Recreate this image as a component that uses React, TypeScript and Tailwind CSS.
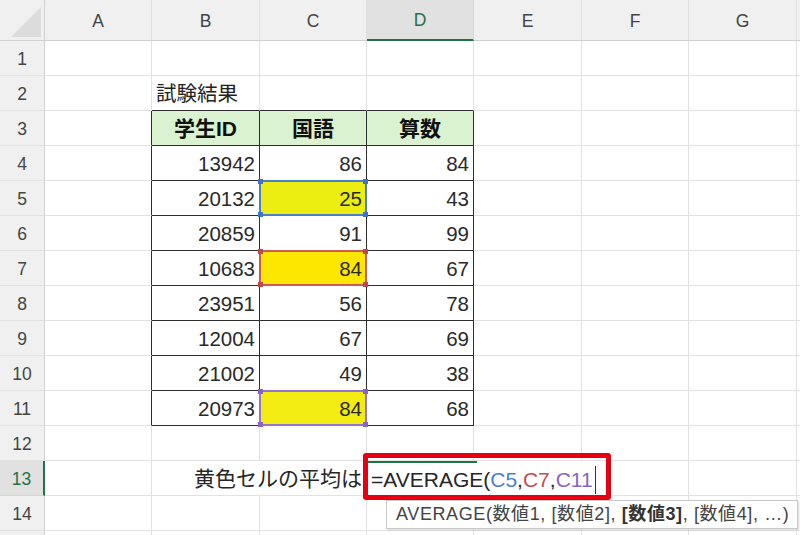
import React from "react";

const COLS = ["A", "B", "C", "D", "E", "F", "G", "H"];
const ROWS = Array.from({ length: 15 }, (_, i) => i + 1);

const scores = [
  [13942, 86, 84],
  [20132, 25, 43],
  [20859, 91, 99],
  [10683, 84, 67],
  [23951, 56, 78],
  [12004, 67, 69],
  [21002, 49, 38],
  [20973, 84, 68],
];

const yellow: Record<string, string> = {
  "C5": "bg-[#ecee12]",
  "C7": "bg-[#fde600]",
  "C11": "bg-[#f2ec12]",
};

// colored frames Excel draws round the ranges a formula refers to
const refs: Record<string, { line: string; dot: string }> = {
  "C5": { line: "border-[#4a7fd0]", dot: "bg-[#3f73c8]" },
  "C7": { line: "border-[#cc5a5a]", dot: "bg-[#c04848]" },
  "C11": { line: "border-[#9a72d4]", dot: "bg-[#8a62c8]" },
};

const font = "font-['Liberation_Sans','Noto_Sans_CJK_JP',sans-serif]";

const inTable = (c: number, r: number) => c >= 2 && c <= 4 && r >= 3 && r <= 11;

const RefFrame = ({ line, dot }: { line: string; dot: string }) => (
  <div className={`pointer-events-none absolute -inset-[1px] z-10 border-2 ${line}`}>
    <span className={`absolute -left-[3px] -top-[3px] h-[5px] w-[5px] ${dot}`} />
    <span className={`absolute -right-[3px] -top-[3px] h-[5px] w-[5px] ${dot}`} />
    <span className={`absolute -bottom-[3px] -left-[3px] h-[5px] w-[5px] ${dot}`} />
    <span className={`absolute -bottom-[3px] -right-[3px] h-[5px] w-[5px] ${dot}`} />
  </div>
);

const EditCell = () => (
  <div className="relative z-20 border-b border-r border-b-[#e2e2e2] border-r-[#e2e2e2] bg-white">
    {/* in-cell editor, spills over E and F */}
    <div className="absolute left-0 top-0 flex h-[35px] w-[240px] items-center bg-white pt-[2px]">
      <div className="absolute left-0 top-0 h-[2px] w-[110px] bg-[#217346]" />
      <span className="whitespace-nowrap pl-[4px] text-[21px] text-[#262626]">
        =AVERAGE(<span className="text-[#4a7fd0]">C5</span>,<span className="text-[#c44d4d]">C7</span>,
        <span className="text-[#8a64c4]">C11</span>
      </span>
      <span className="ml-[2px] h-[28px] w-px bg-[#333]" />
    </div>

    {/* highlight frame */}
    <div className="absolute -left-[4px] -top-[8px] h-[47px] w-[248px] rounded-[3px] border-[5px] border-[#e60012]" />

    {/* argument tooltip */}
    <div className="absolute left-[19px] top-[39px] flex h-[29px] w-[412px] items-center border border-[#c8c8c8] bg-white pl-[9px] text-[18px] tracking-[0.6px] text-[#444] shadow-[1px_1px_2px_rgba(0,0,0,0.15)]">
      <span className="whitespace-nowrap">
        AVERAGE(数値1, [数値2], <b className="text-[#333]">[数値3]</b>, [数値4], …)
      </span>
    </div>
  </div>
);

const Cell = ({ c, r }: { c: number; r: number }) => {
  const col = COLS[c - 1];
  const key = `${col}${r}`;

  if (key === "D13") return <EditCell />;

  // right edge dark when it touches the table, B13 has none (text spills over)
  let right = "border-r border-r-[#e2e2e2]";
  if (r >= 3 && r <= 11 && c >= 1 && c <= 4) right = "border-r border-r-[#2e2e2e]";
  if (key === "B13") right = "border-r border-r-transparent";

  let bottom = "border-b border-b-[#e2e2e2]";
  if (c >= 2 && c <= 4 && r >= 2 && r <= 11) bottom = "border-b border-b-[#2e2e2e]";

  let bg = "bg-white";
  if (r === 3 && inTable(c, r)) bg = "bg-[#daf2d0]";
  if (yellow[key]) bg = yellow[key];

  let content: React.ReactNode = null;
  let align = "justify-end pr-[4px]";

  if (key === "B2") {
    content = <span className="text-[20.5px] text-[#222]">試験結果</span>;
    align = "justify-start pl-[4px]";
  }
  if (r === 3 && inTable(c, r)) {
    const label = ["学生ID", "国語", "算数"][c - 2];
    content = <span className="text-[21px] font-bold text-[#111]">{label}</span>;
    align = "justify-center";
  }
  if (r >= 4 && r <= 11 && inTable(c, r)) {
    content = <span className="text-[20.5px] text-[#2a2a2a]">{scores[r - 4][c - 2]}</span>;
  }
  if (key === "C13") {
    content = <span className="whitespace-nowrap text-[21px] text-[#262626]">黄色セルの平均は</span>;
  }

  return (
    <div className={`relative flex items-center overflow-visible pt-[2px] ${right} ${bottom} ${bg} ${align}`}>
      {content}
      {refs[key] && <RefFrame {...refs[key]} />}
    </div>
  );
};

export default function App() {
  return (
    <div className={`h-[535px] w-[800px] overflow-hidden bg-white ${font}`}>
      <div className="grid grid-cols-[45px_107px_108px_107px_107px_108px_107px_108px_107px] grid-rows-[41px_repeat(15,35px)]">
        {/* select-all corner */}
        <div className="flex items-end justify-end border-b border-r border-[#d0d0d0] bg-[#f0f0f0] p-[3px]">
          <svg width="30" height="30" viewBox="0 0 30 30">
            <polygon points="30,0 30,30 0,30" fill="#dcdcdc" />
          </svg>
        </div>
        {COLS.map((col) =>
          col === "D" ? (
            <div
              key={col}
              className="flex items-center justify-center border-b-2 border-r border-b-[#217346] border-r-[#d8d8d8] bg-[#e1e1e1] pt-[2px] text-[17.5px] text-[#217346]"
            >
              {col}
            </div>
          ) : (
            <div
              key={col}
              className="flex items-center justify-center border-b border-r border-b-[#d0d0d0] border-r-[#e0e0e0] bg-[#f0f0f0] pt-[2px] text-[17.5px] text-[#444]"
            >
              {col === "H" ? "" : col}
            </div>
          )
        )}

        {ROWS.map((r) => (
          <React.Fragment key={r}>
            {r === 13 ? (
              <div className="flex items-center justify-center border-b border-r-2 border-b-[#d6d6d6] border-r-[#217346] bg-[#e1e1e1] pt-[2px] text-[17.5px] text-[#217346]">
                {r}
              </div>
            ) : (
              <div className="flex items-center justify-center border-b border-r border-b-[#e2e2e2] border-r-[#d0d0d0] bg-[#f0f0f0] pt-[2px] text-[17.5px] text-[#444]">
                {r === 15 ? "" : r}
              </div>
            )}
            {COLS.map((_, i) => (
              <Cell key={i} c={i + 1} r={r} />
            ))}
          </React.Fragment>
        ))}
      </div>
    </div>
  );
}
